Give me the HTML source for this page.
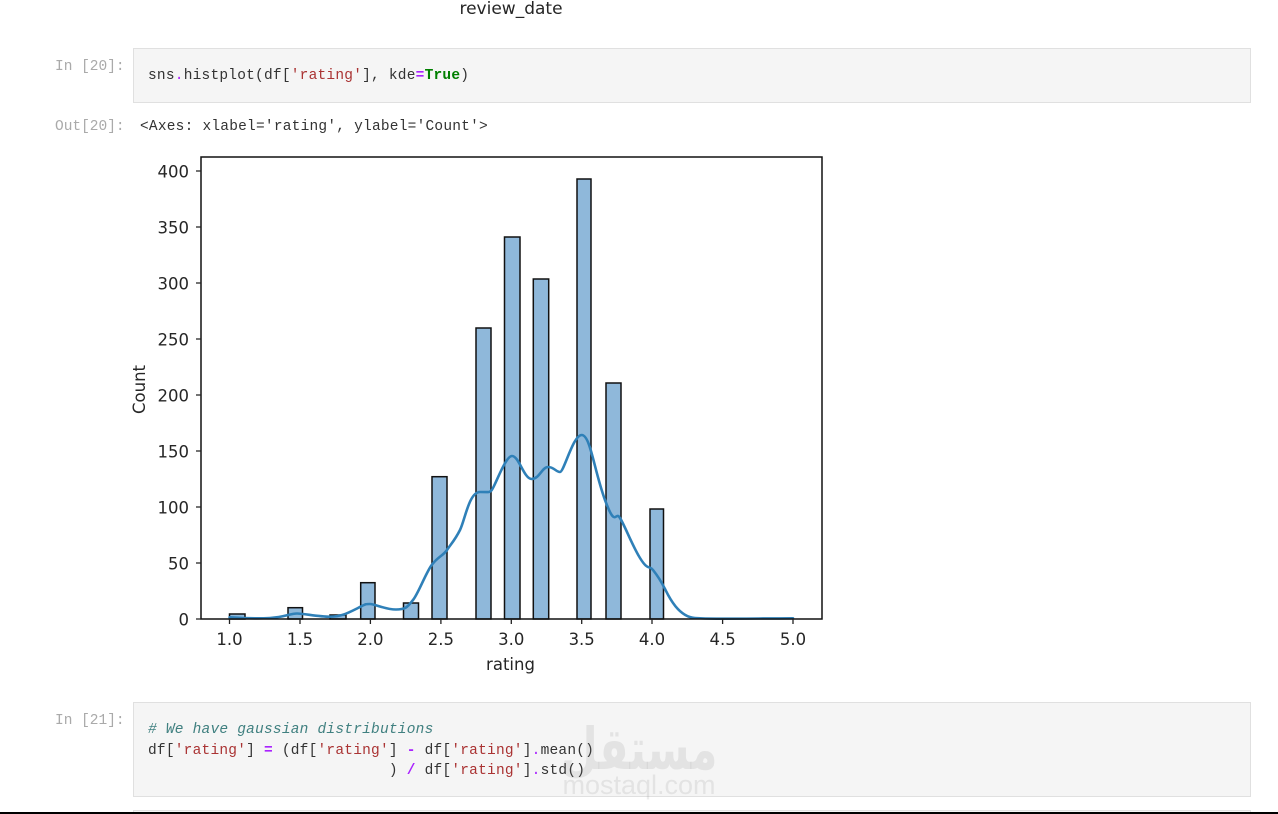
<!DOCTYPE html>
<html><head><meta charset="utf-8"><title>Notebook</title>
<style>
html,body{margin:0;padding:0;background:#fff;width:1278px;height:814px;overflow:hidden}
#w{position:relative;width:1278px;height:814px;overflow:hidden;background:#fff}
.box{position:absolute;left:133px;width:1116px;background:#f5f5f5;border:1px solid #e0e0e0}
pre{position:absolute;margin:0;font:14.5px/20.5px "Liberation Mono",monospace;letter-spacing:.22px;color:#333;white-space:pre}
.p{color:#a2f;font-weight:bold}.s{color:#a33}.g{color:#008000;font-weight:bold}.c{color:#408080;font-style:italic}.d{color:#a2f}
pre.lab{color:#aaa;letter-spacing:0}
svg{position:absolute;left:0;top:0}
</style></head><body><div id="w">
<div class="box" style="top:48px;height:53px"></div>
<div class="box" style="top:702px;height:93px"></div>
<div class="box" style="top:810px;height:20px"></div>
<pre class="lab" style="left:55px;top:57px">In [20]:</pre>
<pre style="left:148px;top:66px">sns<span class="d">.</span>histplot(df[<span class="s">'rating'</span>], kde<span class="p">=</span><span class="g">True</span>)</pre>
<pre class="lab" style="left:55px;top:117px">Out[20]:</pre>
<pre style="left:140px;top:117px">&lt;Axes: xlabel='rating', ylabel='Count'&gt;</pre>
<pre class="lab" style="left:55px;top:711px">In [21]:</pre>
<pre style="left:148px;top:720px"><span class="c"># We have gaussian distributions</span>
df[<span class="s">'rating'</span>] <span class="p">=</span> (df[<span class="s">'rating'</span>] <span class="p">-</span> df[<span class="s">'rating'</span>]<span class="d">.</span>mean()
                           ) <span class="p">/</span> df[<span class="s">'rating'</span>]<span class="d">.</span>std()</pre>
<svg width="1278" height="814" viewBox="0 0 1278 814" font-family="'DejaVu Sans',sans-serif" font-size="16.5" fill="#262626">
<text x="511" y="14" text-anchor="middle" font-size="17">review_date</text>
<g fill="#8fb8da" stroke="#111" stroke-width="1.5">
<rect x="229.5" y="614" width="15.5" height="5"/>
<rect x="288" y="607.7" width="14.5" height="11.3"/>
<rect x="330" y="615" width="16" height="4"/>
<rect x="360.7" y="582.7" width="14.3" height="36.3"/>
<rect x="403.5" y="603" width="15" height="16"/>
<rect x="432" y="476.7" width="15" height="142.3"/>
<rect x="476" y="328" width="15" height="291"/>
<rect x="504.5" y="237" width="15.5" height="382"/>
<rect x="533.3" y="279" width="15.4" height="340"/>
<rect x="577" y="179" width="14" height="440"/>
<rect x="606" y="383" width="15" height="236"/>
<rect x="650" y="509" width="13.5" height="110"/>
</g>
<path fill="none" stroke="#2f80b8" stroke-width="2.6" stroke-linecap="round" d="M229.5 617.3C240 618 255 618.8 270 618S290 613.5 297 613.5S318 616.7 330 616.7S350 612 358 608S365 604 370 604S385 609.5 396 609.5S408 606 413 600S425 575 431 566S443 556 447 550S455 540 460 530S469 492 480 492S488 492.5 491 491S505 456 512 456S524 479 531.7 479S542 467 548 467S556 472 560 472S573 435 581.7 435S594 470 605 500S615 510 620 518S632 545 640 558S649 565 653 570S662 583 665 589S678 617 695 618S720 618.7 793 618.3"/>
<rect x="201" y="157" width="621" height="462" fill="none" stroke="#111" stroke-width="1.5"/>
<g stroke="#222" stroke-width="1.3">
<path d="M196 619H201M196 563H201M196 507H201M196 451H201M196 395H201M196 339H201M196 283H201M196 227H201M196 171H201"/>
<path d="M229.5 619V624M300 619V624M370.4 619V624M440.9 619V624M511.3 619V624M581.7 619V624M652 619V624M722.6 619V624M793 619V624"/>
</g>
<g text-anchor="end">
<text x="189" y="625.5">0</text><text x="189" y="569.5">50</text><text x="189" y="513.5">100</text><text x="189" y="457.5">150</text><text x="189" y="401.5">200</text><text x="189" y="345.5">250</text><text x="189" y="289.5">300</text><text x="189" y="233.5">350</text><text x="189" y="177.5">400</text>
</g>
<g text-anchor="middle">
<text x="229.5" y="645">1.0</text><text x="300" y="645">1.5</text><text x="370.4" y="645">2.0</text><text x="440.9" y="645">2.5</text><text x="511.3" y="645">3.0</text><text x="581.7" y="645">3.5</text><text x="652" y="645">4.0</text><text x="722.6" y="645">4.5</text><text x="793" y="645">5.0</text>
<text x="510.5" y="670">rating</text>
<text transform="translate(145 389.5) rotate(-90)">Count</text>
</g>
<text transform="translate(639 769) scale(.74 1)" text-anchor="middle" font-size="58" font-weight="bold" fill="#777" fill-opacity=".14" font-family="'DejaVu Sans',sans-serif">مستقل</text>
<text x="639" y="794" text-anchor="middle" font-size="27" fill="#777" fill-opacity=".14" font-family="'Liberation Sans',sans-serif">mostaql.com</text>
</svg>
<div style="position:absolute;left:0;top:812px;width:1278px;height:2px;background:#000"></div>
</div></body></html>
